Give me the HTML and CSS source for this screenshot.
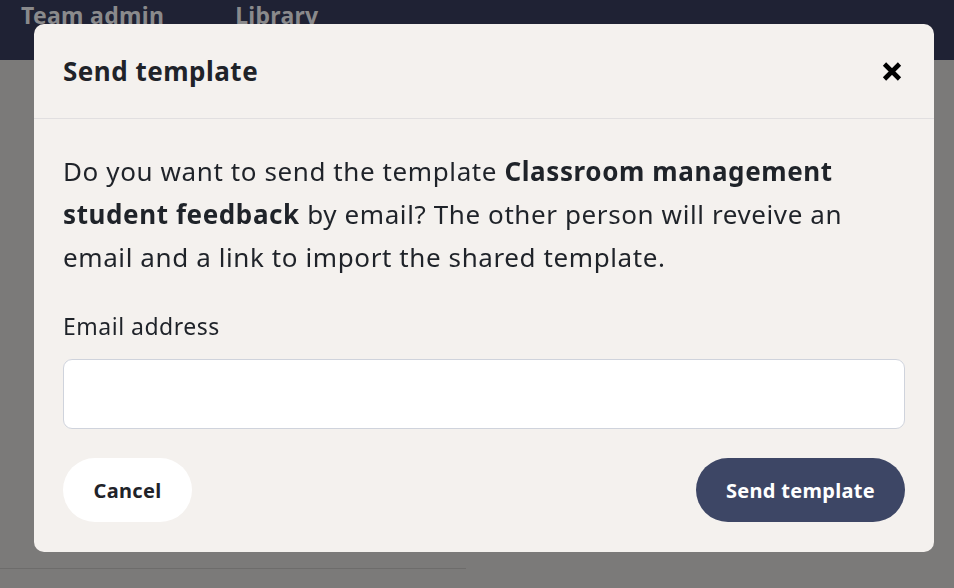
FILE: index.html
```html
<!DOCTYPE html>
<html lang="en">
<head>
<meta charset="utf-8">
<title>Send template</title>
<link rel="stylesheet" href="styles.css">
</head>
<body>
<header class="topbar">
  <nav class="nav">
    <a class="nav-link">Team admin</a>
    <a class="nav-link">Library</a>
  </nav>
</header>
<main class="page">
  <div class="page-rule"></div>
</main>
<div class="overlay">
  <div class="modal" role="dialog" aria-labelledby="modal-title">
    <div class="modal-header">
      <h2 id="modal-title" class="modal-title">Send template</h2>
      <button class="close" aria-label="Close">
        <svg width="22" height="23" viewBox="0 0 22 23"><path d="M3.5 4 L18.5 19 M18.5 4 L3.5 19" stroke="#000" stroke-width="4.6" stroke-linecap="butt"/></svg>
      </button>
    </div>
    <div class="modal-body">
      <p class="intro">Do you want to send the template <strong>Classroom management student feedback</strong> by email? The other person will reveive an email and a link to import the shared template.</p>
      <label class="label" for="email">Email address</label>
      <input class="input" id="email" type="email">
      <div class="actions">
        <button class="btn btn-light">Cancel</button>
        <button class="btn btn-dark">Send template</button>
      </div>
    </div>
  </div>
</div>
</body>
</html>
```
FILE: styles.css
```css
* { box-sizing: border-box; }
html, body { margin: 0; padding: 0; }
body {
  font-family: "Noto Sans", "Open Sans", sans-serif;
  color: #1f2329;
  background: #7b7a79;
  width: 954px;
  height: 588px;
  overflow: hidden;
}
.topbar {
  height: 60px;
  background: #1f2234;
  display: flex;
  align-items: flex-start;
}
.nav {
  display: flex;
  gap: 71px;
  padding-left: 21px;
}
.nav-link {
  font-size: 23px;
  font-weight: 700;
  color: #8a8a8c;
  line-height: 30px;
  letter-spacing: 0.3px;
}
.page {
  height: 528px;
  display: flex;
  flex-direction: column;
  justify-content: flex-end;
  padding-bottom: 19px;
}
.page-rule {
  width: 466px;
  height: 1px;
  background: #6d6c6b;
}
.overlay {
  position: fixed;
  inset: 0;
  padding: 24px 20px 0 34px;
}
.modal {
  width: 900px;
  height: 528px;
  background: #f4f1ee;
  border-radius: 10px;
  display: flex;
  flex-direction: column;
}
.modal-header {
  height: 95px;
  border-bottom: 1px solid #e1dfe0;
  display: flex;
  align-items: center;
  justify-content: space-between;
  padding: 0 31px 0 29px;
}
.modal-title {
  margin: 0;
  font-size: 26px;
  font-weight: 700;
  letter-spacing: 0.5px;
}
.close {
  border: 0;
  background: none;
  padding: 0;
  display: flex;
  cursor: pointer;
}
.modal-body {
  padding: 31px 29px 29px 29px;
  display: flex;
  flex-direction: column;
}
.intro {
  margin: 0;
  font-size: 26px;
  line-height: 43px;
  letter-spacing: 0.6px;
}
.intro strong { font-weight: 700; }
.label {
  margin-top: 31px;
  font-size: 23px;
  line-height: 33px;
  letter-spacing: 0.5px;
}
.input {
  margin-top: 16px;
  height: 70px;
  border: 1px solid #cfd3dc;
  border-radius: 9px;
  background: #fff;
  font: inherit;
}
.actions {
  margin-top: 29px;
  display: flex;
  justify-content: space-between;
}
.btn {
  height: 64px;
  border: 0;
  border-radius: 32px;
  font-family: inherit;
  font-size: 20px;
  font-weight: 700;
  letter-spacing: 0.3px;
  cursor: pointer;
}
.btn-light {
  width: 129px;
  background: #fff;
  color: #1f2329;
}
.btn-dark {
  width: 209px;
  background: #3d4665;
  color: #fff;
}
```
